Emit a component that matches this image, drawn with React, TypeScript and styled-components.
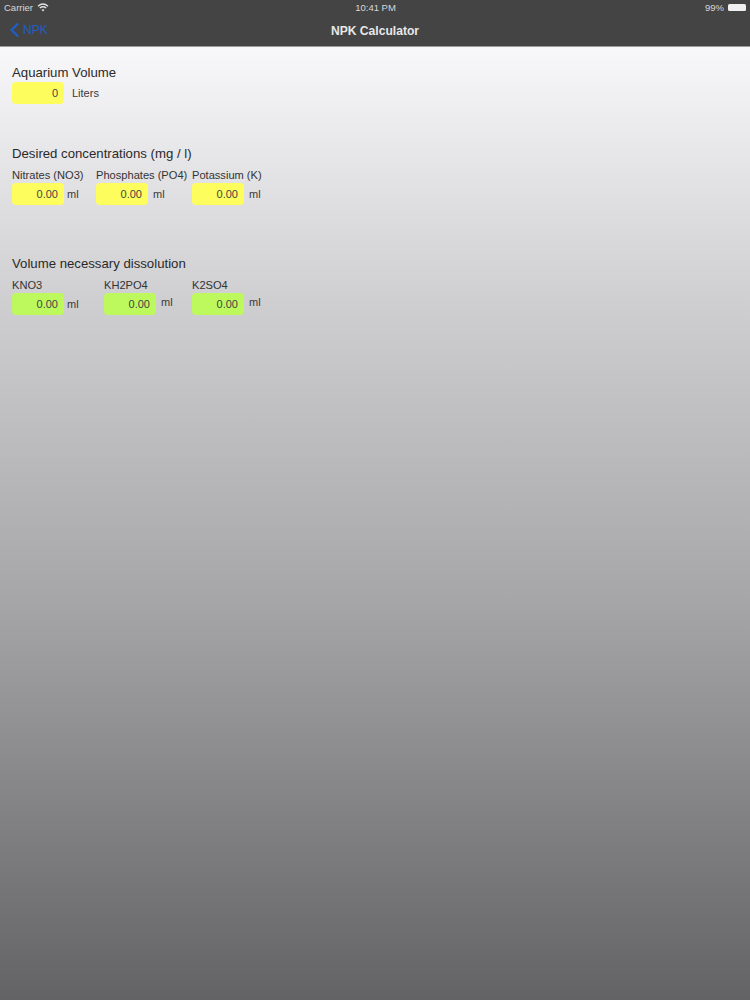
import styled, { createGlobalStyle } from "styled-components";

const GlobalStyle = createGlobalStyle`
  html, body {
    margin: 0;
    padding: 0;
  }
  body {
    font-family: "Liberation Sans", Arial, sans-serif;
    -webkit-font-smoothing: antialiased;
  }
`;

interface IField {
  label: string;
  value: string;
  width: number;
}

const concentrations: IField[] = [
  { label: "Nitrates (NO3)", value: "0.00", width: 84 },
  { label: "Phosphates (PO4)", value: "0.00", width: 96 },
  { label: "Potassium (K)", value: "0.00", width: 72 },
];

const dissolution: IField[] = [
  { label: "KNO3", value: "0.00", width: 92 },
  { label: "KH2PO4", value: "0.00", width: 88 },
  { label: "K2SO4", value: "0.00", width: 72 },
];

const App = () => {
  return (
    <>
      <GlobalStyle />
      <Page>
        <Header>
          <StatusBar>
            <StatusSide>
              <span>Carrier</span>
              <svg width="12" height="9" viewBox="0 0 12 9" fill="none" stroke="#e4e4e4">
                <path d="M1 3.2C4 .6 8 .6 11 3.2" strokeWidth="1.3" />
                <path d="M2.8 5C4.8 3.4 7.2 3.4 9.2 5" strokeWidth="1.3" />
                <path d="M6 8.6 4.4 6.7C5.4 6 6.6 6 7.6 6.7Z" fill="#e4e4e4" stroke="none" />
              </svg>
            </StatusSide>
            <Clock>10:41 PM</Clock>
            <StatusSide>
              <span>99%</span>
              <Battery />
            </StatusSide>
          </StatusBar>
          <NavBar>
            <BackLink>
              <svg width="11" height="16" viewBox="0 0 11 16" fill="none">
                <path d="M9 1.5 2.5 8 9 14.5" stroke="#1d5fc4" strokeWidth="2.2" />
              </svg>
              <span>NPK</span>
            </BackLink>
            <Title>NPK Calculator</Title>
          </NavBar>
        </Header>

        <Content>
          <VolumeSection>
            <VolumeTitle>Aquarium Volume</VolumeTitle>
            <InputLine>
              <Input $color="yellow">0</Input>
              <LitersUnit>Liters</LitersUnit>
            </InputLine>
          </VolumeSection>

          <Section>
            <SectionTitle>Desired concentrations (mg / l)</SectionTitle>
            <FieldRow>
              {concentrations.map((item, index) => (
                <Field key={item.label} $width={item.width}>
                  <FieldLabel>{item.label}</FieldLabel>
                  <InputLine>
                    <Input $color="yellow">{item.value}</Input>
                    <Unit $gap={index > 0 ? 5 : 3}>ml</Unit>
                  </InputLine>
                </Field>
              ))}
            </FieldRow>
          </Section>

          <Section>
            <SectionTitle>Volume necessary dissolution</SectionTitle>
            <FieldRow>
              {dissolution.map((item, index) => (
                <Field key={item.label} $width={item.width}>
                  <FieldLabel>{item.label}</FieldLabel>
                  <InputLine>
                    <Input $color="green">{item.value}</Input>
                    <Unit $gap={index > 0 ? 5 : 3} $raised={index > 0}>
                      ml
                    </Unit>
                  </InputLine>
                </Field>
              ))}
            </FieldRow>
          </Section>
        </Content>
      </Page>
    </>
  );
};

const Page = styled.div`
  width: 750px;
  height: 1000px;
  overflow: hidden;
  background: linear-gradient(to bottom, #f8f7f9 47px, #cfced0 300px, #a6a5a7 600px, #636264 1000px);
  color: #222;
`;
const Header = styled.header`
  height: 46px;
  background-color: #454445;
  border-bottom: 1px solid #9b9a9b;
`;
const StatusBar = styled.div`
  display: flex;
  justify-content: space-between;
  align-items: center;
  height: 15px;
  padding: 0 4px;
  font-size: 9.5px;
  color: #d8d8d8;
`;
const StatusSide = styled.div`
  display: flex;
  align-items: center;
  gap: 4px;
  flex: 1;
  &:last-child {
    justify-content: flex-end;
  }
`;
const Clock = styled.div`
  margin-left: 1px;
  color: #d8d8d8;
`;
const Battery = styled.i`
  display: block;
  width: 18px;
  height: 7px;
  border-radius: 1.5px;
  background-color: #f0f0f0;
`;
const NavBar = styled.div`
  position: relative;
  display: flex;
  align-items: center;
  justify-content: center;
  height: 31px;
`;
const BackLink = styled.div`
  position: absolute;
  left: 9px;
  top: 7px;
  display: flex;
  align-items: center;
  gap: 3px;
  font-size: 12px;
  color: #1d5fc4;
`;
const Title = styled.h1`
  margin: 0;
  font-size: 12.1px;
  font-weight: 700;
  color: #e8e8e8;
`;
const Content = styled.main`
  display: flex;
  flex-direction: column;
  padding: 17px 0 0 12px;
`;
const Section = styled.section`
  display: flex;
  flex-direction: column;
  margin-bottom: 50px;
`;
const VolumeSection = styled(Section)`
  margin-bottom: 41px;
`;
const SectionTitle = styled.h2`
  margin: 0 0 7px;
  font-size: 13.2px;
  line-height: 17px;
  font-weight: 400;
  color: #2a2a2a;
`;
const VolumeTitle = styled(SectionTitle)`
  margin-bottom: 1px;
`;
const FieldRow = styled.div`
  display: flex;
`;
const Field = styled.div<{ $width: number }>`
  display: flex;
  flex-direction: column;
  gap: 1px;
  width: ${(props) => props.$width}px;
`;
const FieldLabel = styled.label`
  font-size: 11.1px;
  line-height: 13px;
  white-space: nowrap;
  color: #333;
`;
const InputLine = styled.div`
  display: flex;
  align-items: center;
`;
const Input = styled.div<{ $color: "yellow" | "green" }>`
  box-sizing: border-box;
  width: 52px;
  height: 22px;
  padding-right: 6px;
  border-radius: 4px;
  background-color: ${(props) => (props.$color === "yellow" ? "#fdfd5e" : "#bdf95c")};
  font-size: 11px;
  line-height: 22px;
  text-align: right;
  color: #444;
`;
const Unit = styled.span<{ $gap?: number; $raised?: boolean }>`
  margin-left: ${(props) => props.$gap ?? 3}px;
  margin-top: ${(props) => (props.$raised ? -4 : 0)}px;
  font-size: 11px;
  color: #3a3a3a;
`;
const LitersUnit = styled(Unit)`
  margin-left: 8px;
`;

export default App;
